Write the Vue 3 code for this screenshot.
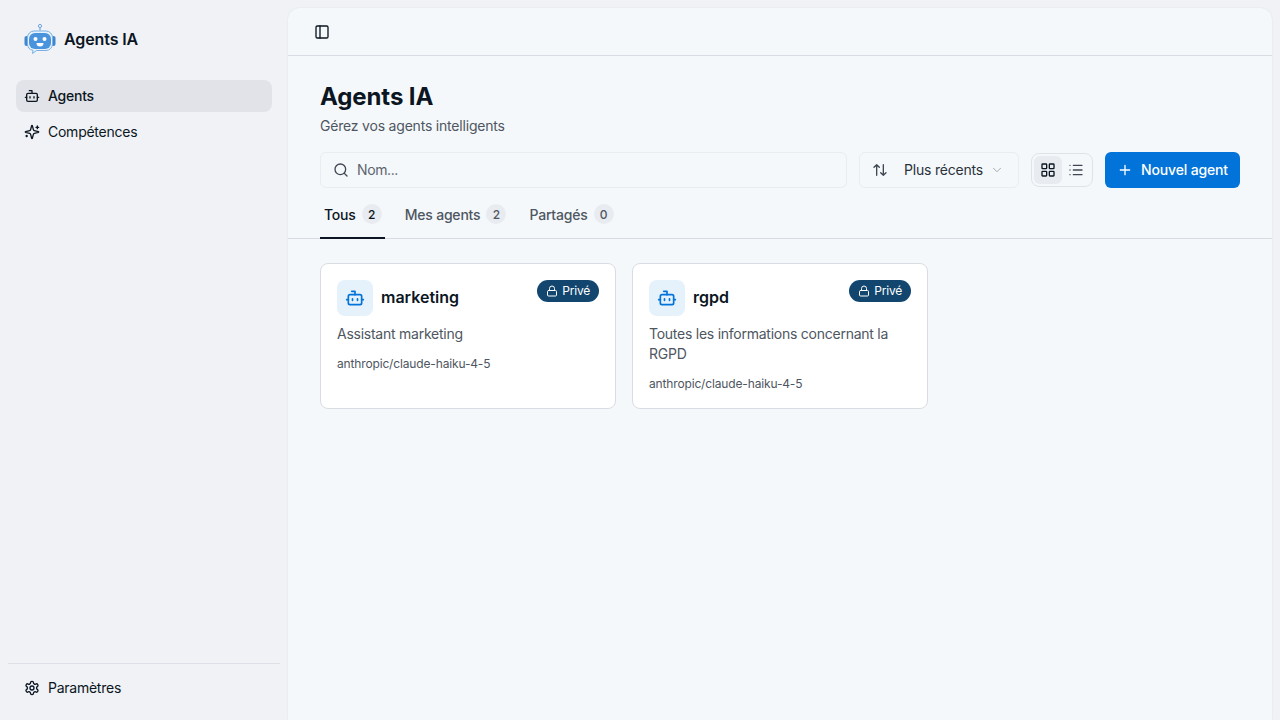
<template>
  <div class="app">
    <aside class="sidebar">
      <div class="brand">
        <svg class="brand-logo" viewBox="0 0 32 32" width="32" height="32">
          <path d="M16 7.500V4.500" stroke="#6ea6dc" stroke-width="1.2" fill="none" />
          <circle cx="16" cy="3" r="1.600" fill="#f0f2f6" stroke="#6ea6dc" stroke-width="1" />
          <rect x=".5" y="13" width="4" height="10" rx="2" fill="#3f86cc" />
          <rect x="27.500" y="13" width="4" height="10" rx="2" fill="#3f86cc" />
          <path d="M10 8h12a6.500 6.500 0 0 1 6.500 6.500v6.500a6.500 6.500 0 0 1-6.500 6.500H12.500l-4 3 .5-3.200a6.500 6.500 0 0 1-5.500-6.300v-6.500A6.500 6.500 0 0 1 10 8z" fill="#e8f2fb" stroke="#79b0e4" stroke-width="1" />
          <rect x="5" y="10" width="22" height="16" rx="6" fill="#4a94de" />
          <circle cx="11.500" cy="16" r="2" fill="#fff" />
          <circle cx="20.500" cy="16" r="2" fill="#fff" />
          <path d="M12.500 20a3.500 3.500 0 0 0 7 0z" fill="#fff" />
        </svg>
        <span class="brand-name">Agents IA</span>
      </div>
      <nav class="nav">
        <a class="nav-item active">
          <svg class="icon" viewBox="0 0 24 24"><path d="M12 8V4H8" /><rect x="4" y="8" width="16" height="12" rx="2" /><path d="M2 14h2M20 14h2M15 13v2M9 13v2" /></svg>
          <span class="lbl">Agents</span>
        </a>
        <a class="nav-item">
          <svg class="icon" viewBox="0 0 24 24"><path d="M9.937 15.500A2 2 0 0 0 8.500 14.063l-6.135-1.582a.5.5 0 0 1 0-.962L8.500 9.936A2 2 0 0 0 9.937 8.500l1.582-6.135a.5.5 0 0 1 .963 0L14.063 8.500A2 2 0 0 0 15.500 9.937l6.135 1.581a.5.5 0 0 1 0 .964L15.500 14.063a2 2 0 0 0-1.437 1.437l-1.582 6.135a.5.5 0 0 1-.963 0z" /><path d="M20 3v4M22 5h-4M4 17v2M5 18H3" /></svg>
          <span class="lbl">Compétences</span>
        </a>
      </nav>
      <div class="sidebar-foot">
        <a class="nav-item">
          <svg class="icon" viewBox="0 0 24 24"><path d="M12.220 2h-.44a2 2 0 0 0-2 2v.18a2 2 0 0 1-1 1.730l-.43.25a2 2 0 0 1-2 0l-.15-.08a2 2 0 0 0-2.730.73l-.22.38a2 2 0 0 0 .73 2.730l.15.1a2 2 0 0 1 1 1.720v.51a2 2 0 0 1-1 1.740l-.15.09a2 2 0 0 0-.73 2.730l.22.38a2 2 0 0 0 2.730.73l.15-.08a2 2 0 0 1 2 0l.43.25a2 2 0 0 1 1 1.730V20a2 2 0 0 0 2 2h.44a2 2 0 0 0 2-2v-.18a2 2 0 0 1 1-1.730l.43-.25a2 2 0 0 1 2 0l.15.08a2 2 0 0 0 2.730-.73l.22-.39a2 2 0 0 0-.73-2.730l-.15-.08a2 2 0 0 1-1-1.740v-.5a2 2 0 0 1 1-1.740l.15-.09a2 2 0 0 0 .73-2.730l-.22-.38a2 2 0 0 0-2.730-.73l-.15.08a2 2 0 0 1-2 0l-.43-.25a2 2 0 0 1-1-1.730V4a2 2 0 0 0-2-2z" /><circle cx="12" cy="12" r="3" /></svg>
          <span class="lbl">Paramètres</span>
        </a>
      </div>
    </aside>

    <main class="main">
      <header class="topbar">
        <svg class="icon panel-icon" viewBox="0 0 24 24"><rect x="3" y="3" width="18" height="18" rx="2" /><path d="M9 3v18" /></svg>
      </header>

      <section class="head">
        <h1>Agents IA</h1>
        <p class="subtitle">Gérez vos agents intelligents</p>

        <div class="toolbar">
          <label class="search">
            <svg class="icon" viewBox="0 0 24 24"><circle cx="11" cy="11" r="8" /><path d="m21 21-4.300-4.300" /></svg>
            <input v-model="query" type="text" placeholder="Nom..." />
          </label>
          <div class="sort">
            <svg class="icon" viewBox="0 0 24 24"><path d="m21 16-4 4-4-4M17 20V4M3 8l4-4 4 4M7 4v16" /></svg>
            <span class="sort-label lbl">Plus récents</span>
            <svg class="icon chevron" viewBox="0 0 24 24"><path d="m6 9 6 6 6-6" /></svg>
          </div>
          <div class="view-toggle">
            <button class="view-btn on">
              <svg class="icon" viewBox="0 0 24 24"><rect x="3" y="3" width="7" height="7" rx="1" /><rect x="14" y="3" width="7" height="7" rx="1" /><rect x="14" y="14" width="7" height="7" rx="1" /><rect x="3" y="14" width="7" height="7" rx="1" /></svg>
            </button>
            <button class="view-btn">
              <svg class="icon" viewBox="0 0 24 24"><path d="M3 5h.01M3 12h.01M3 19h.01M8 5h13M8 12h13M8 19h13" /></svg>
            </button>
          </div>
          <button class="btn-new">
            <svg class="icon" viewBox="0 0 24 24"><path d="M5 12h14M12 5v14" /></svg>
            <span class="lbl">Nouvel agent</span>
          </button>
        </div>

        <div class="tabs">
          <button v-for="tab in tabs" :key="tab.label" class="tab" :class="{ selected: tab.selected }">
            {{ tab.label }}
            <span class="count">{{ tab.count }}</span>
          </button>
        </div>
      </section>

      <section class="cards">
        <article v-for="agent in agents" :key="agent.name" class="card">
          <div class="card-top">
            <div class="card-title">
              <span class="avatar">
                <svg class="icon" viewBox="0 0 24 24"><path d="M12 8V4H8" /><rect x="4" y="8" width="16" height="12" rx="2" /><path d="M2 14h2M20 14h2M15 13v2M9 13v2" /></svg>
              </span>
              <h2>{{ agent.name }}</h2>
            </div>
            <span class="badge">
              <svg class="icon" viewBox="0 0 24 24"><rect x="3" y="11" width="18" height="11" rx="2" /><path d="M7 11V7a5 5 0 0 1 10 0v4" /></svg>
              <span class="lbl">Privé</span>
            </span>
          </div>
          <p class="desc">{{ agent.desc }}</p>
          <p class="model">{{ agent.model }}</p>
        </article>
      </section>
    </main>
  </div>
</template>

<script setup>
import { ref } from "vue"

const query = ref("")

const tabs = [
  { label: "Tous", count: 2, selected: true },
  { label: "Mes agents", count: 2 },
  { label: "Partagés", count: 0 }
]

const agents = [
  { name: "marketing", desc: "Assistant marketing", model: "anthropic/claude-haiku-4-5" },
  { name: "rgpd", desc: "Toutes les informations concernant la RGPD", model: "anthropic/claude-haiku-4-5" }
]
</script>

<style>
html, body {
  margin: 0;
  background: #f0f2f6;
}
</style>

<style scoped>
.app {
  display: flex;
  height: 720px;
  background: #f0f2f6;
  color: #0b1622;
  font-family: Inter, "Liberation Sans", sans-serif;
  font-size: 14px;
  letter-spacing: -0.2px;
  overflow: hidden;
}

.icon {
  width: 16px;
  height: 16px;
  flex: none;
  fill: none;
  stroke: currentColor;
  stroke-width: 2;
  stroke-linecap: round;
  stroke-linejoin: round;
}

.lbl {
  padding-bottom: 2px;
}

.sidebar {
  width: 288px;
  flex: none;
  display: flex;
  flex-direction: column;
  box-sizing: border-box;
}

.brand {
  display: flex;
  align-items: center;
  gap: 8px;
  height: 32px;
  padding: 23px 0 25px 24px;
}

.brand-name {
  font-size: 16px;
  font-weight: 600;
  letter-spacing: -0.1px;
}

.nav {
  display: flex;
  flex-direction: column;
  gap: 4px;
  padding: 0 16px;
}

.nav-item {
  display: flex;
  align-items: center;
  gap: 8px;
  height: 32px;
  padding: 0 8px;
  border-radius: 8px;
  font-weight: 400;
  letter-spacing: -0.25px;
}

.nav-item.active {
  background: #e1e3e8;
  font-weight: 500;
}

.sidebar-foot {
  margin: auto 8px 0;
  padding: 8px 8px 16px;
  border-top: 1px solid #dcdfe5;
}

.main {
  flex: 1;
  margin: 8px 8px 0 0;
  background: #f5f8fb;
  border-radius: 12px 12px 0 0;
  box-shadow: 0 0 2px rgba(20, 30, 50, 0.08);
}

.topbar {
  display: flex;
  align-items: center;
  height: 47px;
  padding: 0 26px;
  border-bottom: 1px solid #d9dde3;
}

.head {
  padding: 0 32px;
  border-bottom: 1px solid #d9dde3;
}

h1 {
  margin: 25px 0 0;
  font-size: 24px;
  line-height: 32px;
  font-weight: 700;
  letter-spacing: -0.1px;
}

.subtitle {
  margin: 3px 0 0;
  line-height: 20px;
  color: #4e5661;
}

.toolbar {
  display: flex;
  align-items: center;
  gap: 12px;
  margin-top: 16px;
}

.search {
  flex: 1;
  display: flex;
  align-items: center;
  gap: 8px;
  height: 36px;
  padding: 0 12px;
  border: 1px solid #e9ecf0;
  border-radius: 6px;
  box-sizing: border-box;
  color: #3f4752;
}

.search input {
  flex: 1;
  border: none;
  outline: none;
  background: none;
  padding: 0 0 2px;
  font: inherit;
  letter-spacing: -0.4px;
  color: inherit;
}

.search input::placeholder {
  color: #5c646f;
}

.sort {
  display: flex;
  align-items: center;
  width: 160px;
  height: 36px;
  padding: 0 12px;
  box-sizing: border-box;
  border: 1px solid #e9ecf0;
  border-radius: 6px;
  color: #3f4752;
}

.sort-label {
  margin-left: 16px;
  width: 80px;
  white-space: nowrap;
  color: #2a323c;
}

.chevron {
  margin-left: 6px;
  width: 14px;
  height: 14px;
  opacity: 0.5;
  stroke-width: 1.500;
}

.view-toggle {
  display: flex;
  align-items: center;
  width: 62px;
  height: 34px;
  padding: 2px;
  box-sizing: border-box;
  border: 1px solid #dfe3e8;
  border-radius: 8px;
}

.view-btn {
  display: flex;
  align-items: center;
  justify-content: center;
  width: 28px;
  height: 28px;
  padding: 0;
  border: none;
  border-radius: 6px;
  background: none;
  color: #3f4752;
}

.view-btn.on {
  background: #e8ebef;
  color: #0b1622;
}

.btn-new {
  display: flex;
  align-items: center;
  gap: 8px;
  width: 135px;
  height: 36px;
  padding: 0 0 0 12px;
  border: none;
  border-radius: 6px;
  background: #0274d9;
  color: #fff;
  font: inherit;
  letter-spacing: -0.15px;
  font-weight: 500;
}

.tabs {
  display: flex;
  gap: 16px;
  margin-top: 8px;
  margin-bottom: -1px;
}

.tab {
  display: flex;
  align-items: center;
  gap: 6px;
  height: 43px;
  padding: 0 3px 5px 4px;
  border: none;
  border-bottom: 2px solid transparent;
  background: none;
  font: inherit;
  letter-spacing: -0.2px;
  font-weight: 500;
  color: #4e5661;
  box-sizing: border-box;
}

.tab.selected {
  color: #0b1622;
  border-bottom-color: #0b1622;
}

.count {
  display: flex;
  align-items: center;
  justify-content: center;
  min-width: 20px;
  height: 20px;
  border-radius: 10px;
  background: #e8ebef;
  font-size: 12px;
}

.cards {
  display: flex;
  gap: 16px;
  padding: 24px 32px;
}

.card {
  width: 296px;
  height: 146px;
  padding: 16px;
  box-sizing: border-box;
  background: #fff;
  border: 1px solid #d9dde3;
  border-radius: 8px;
}

.card-top {
  display: flex;
  justify-content: space-between;
  align-items: flex-start;
}

.card-title {
  display: flex;
  align-items: center;
  gap: 8px;
}

.avatar {
  display: flex;
  align-items: center;
  justify-content: center;
  width: 36px;
  height: 36px;
  border-radius: 8px;
  background: #e5f1fb;
  color: #0274d9;
}

.avatar .icon {
  width: 20px;
  height: 20px;
}

h2 {
  margin: 0;
  padding-bottom: 2px;
  font-size: 16px;
  font-weight: 600;
  letter-spacing: 0;
}

.badge {
  display: flex;
  align-items: center;
  gap: 4px;
  height: 22px;
  padding: 0 9px;
  border-radius: 11px;
  background: #12466e;
  color: #fff;
  font-size: 12px;
  font-weight: 400;
}

.badge .icon {
  width: 12px;
  height: 12px;
}

.desc {
  margin: 8px 0 0;
  line-height: 20px;
  letter-spacing: -0.25px;
  color: #4e5661;
}

.model {
  margin: 12px 0 0;
  font-size: 12px;
  line-height: 16px;
  letter-spacing: -0.15px;
  color: #4e5661;
}
</style>
